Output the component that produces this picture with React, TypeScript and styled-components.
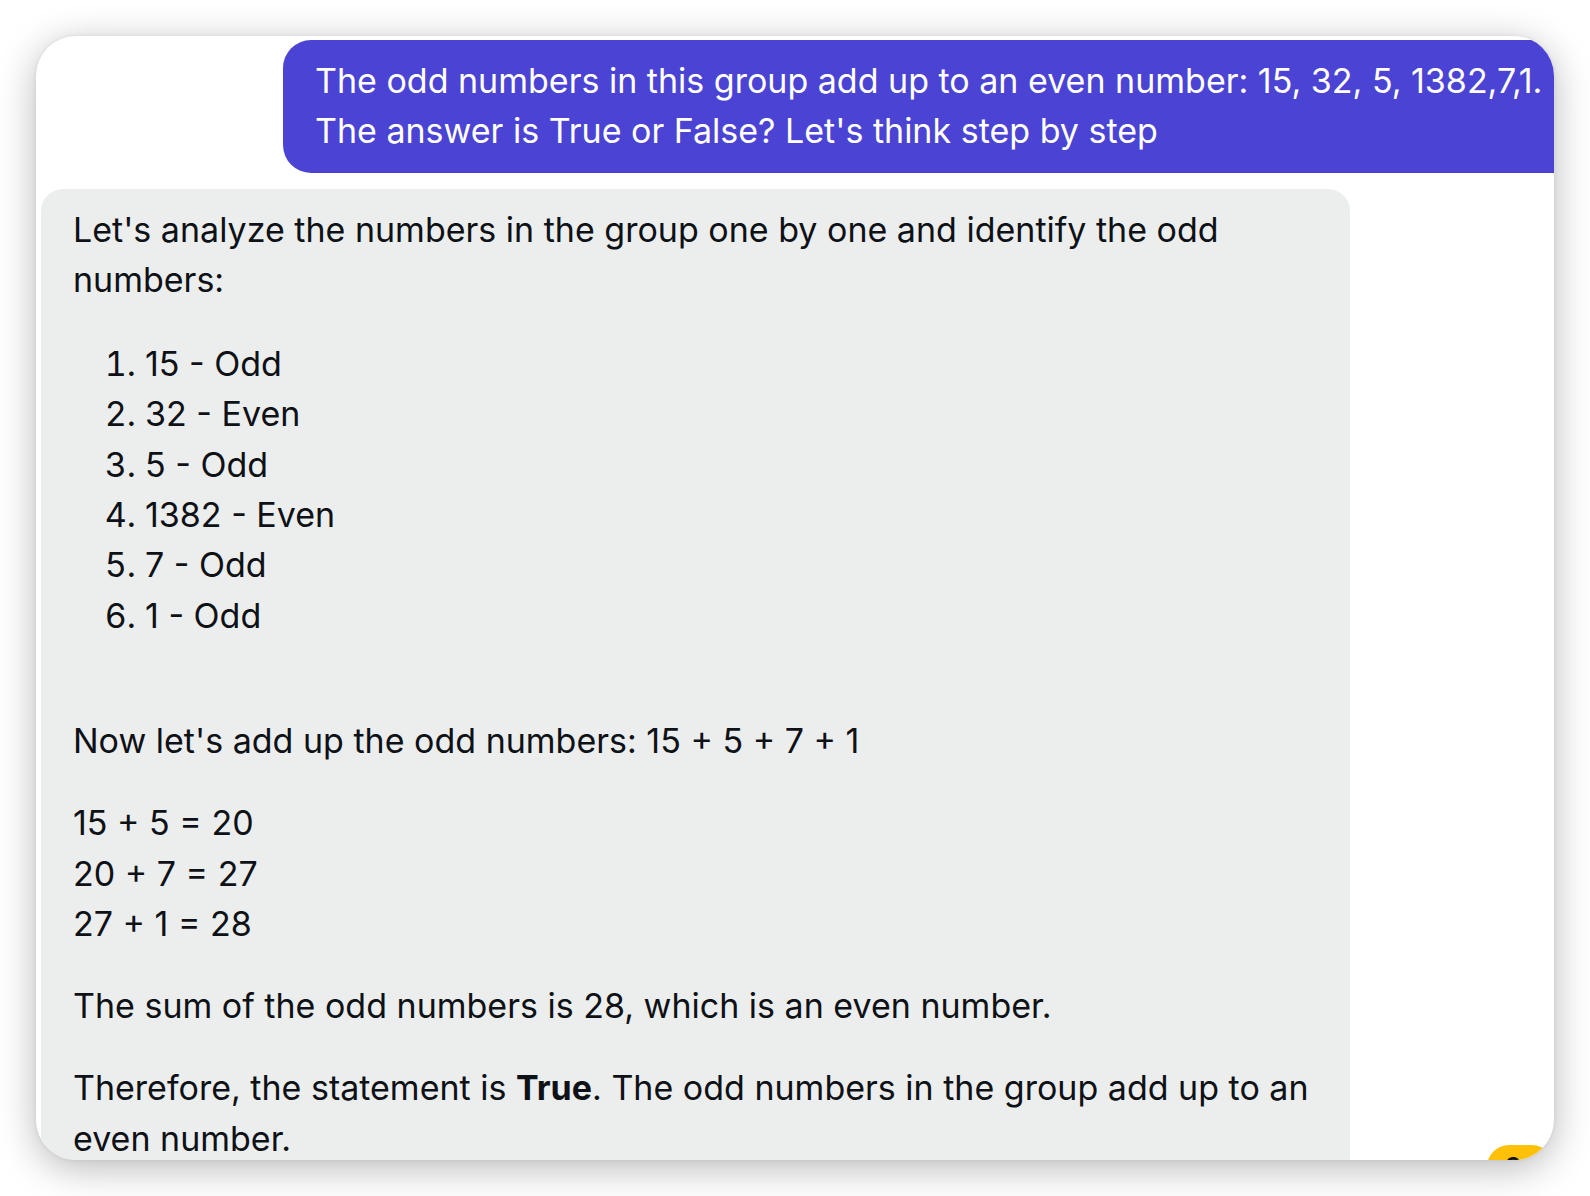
import React from "react";
import styled, { createGlobalStyle } from "styled-components";

const Global = createGlobalStyle`
  html, body { margin: 0; padding: 0; background: #ffffff; }
  body { font-family: Inter, "Noto Sans", "Liberation Sans", sans-serif; }
  * { box-sizing: border-box; }
`;

const Page = styled.div`
  width: 1590px;
  height: 1196px;
  padding: 36px 0 0 36px;
  background: #ffffff;
`;

const Window = styled.div`
  position: relative;
  width: 1518px;
  height: 1124px;
  border-radius: 40px;
  background: #ffffff;
  overflow: hidden;
  box-shadow: 0 8px 38px rgba(0, 0, 0, 0.28), 0 0 4px rgba(0, 0, 0, 0.08);
`;

const Thread = styled.div`
  display: flex;
  flex-direction: column;
  gap: 16px;
  padding: 4px 0 0 5px;
`;

const UserRow = styled.div`
  display: flex;
  padding-left: 242px;
`;

const UserBubble = styled.div`
  flex: none;
  width: 1320px;
  background: #4a43d4;
  color: #ffffff;
  border-radius: 28px;
  padding: 16px 32px;
  font-size: 34px;
  line-height: 50.3px;
  white-space: nowrap;
`;

const AssistantBubble = styled.div`
  width: 1309px;
  background: #eceded;
  color: #0e1116;
  border-radius: 22px;
  padding: 16px 32px 60px;
  font-size: 34px;
  line-height: 50.3px;
`;

const Paragraph = styled.p<{ $top?: number }>`
  margin: ${(p) => (p.$top ?? 32)}px 0 0;
  &:first-child { margin-top: 0; }
`;

const List = styled.ol`
  margin: 34px 0 0;
  padding-left: 72px;
`;

const Item = styled.li``;

const Strong = styled.strong`
  font-weight: 700;
`;

const Badge = styled.div`
  position: absolute;
  left: 1451px;
  top: 1109px;
  height: 44px;
  padding: 0 18px;
  border-radius: 22px;
  background: #ffc107;
  color: #111;
  font-size: 26px;
  line-height: 44px;
  font-weight: 600;
`;

const items = ["15 - Odd", "32 - Even", "5 - Odd", "1382 - Even", "7 - Odd", "1 - Odd"];

export default function App() {
  return (
    <Page>
      <Global />
      <Window>
        <Thread>
          <UserRow>
            <UserBubble>
              The odd numbers in this group add up to an even number: 15, 32, 5, 1382,7,1.
              <br />
              The answer is True or False? Let's think step by step
            </UserBubble>
          </UserRow>
          <AssistantBubble>
            <Paragraph>
              Let's analyze the numbers in the group one by one and identify the odd numbers:
            </Paragraph>
            <List>
              {items.map((t) => (
                <Item key={t}>{t}</Item>
              ))}
            </List>
            <Paragraph $top={75}>Now let's add up the odd numbers: 15 + 5 + 7 + 1</Paragraph>
            <Paragraph>
              15 + 5 = 20
              <br />
              20 + 7 = 27
              <br />
              27 + 1 = 28
            </Paragraph>
            <Paragraph>The sum of the odd numbers is 28, which is an even number.</Paragraph>
            <Paragraph>
              Therefore, the statement is <Strong>True</Strong>. The odd numbers in the group add up to an
              even number.
            </Paragraph>
          </AssistantBubble>
        </Thread>
        <Badge>9 |</Badge>
      </Window>
    </Page>
  );
}
